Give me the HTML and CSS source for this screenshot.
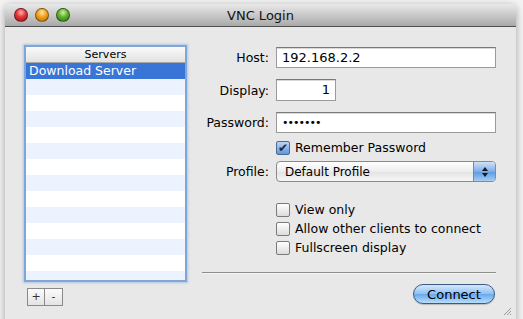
FILE: index.html
```html
<!DOCTYPE html>
<html lang="en">
<head>
  <meta charset="UTF-8">
  <title>VNC Login</title>
  <link rel="stylesheet" href="styles.css">
</head>
<body>
  <div class="window">
    <div class="titlebar">
      <div class="lights">
        <span class="light red"></span>
        <span class="light yellow"></span>
        <span class="light green"></span>
      </div>
      <div class="title">VNC Login</div>
    </div>

    <div class="content">
      <div class="left">
        <div class="list">
          <div class="list-head">Servers</div>
          <div class="row selected">Download Server</div>
          <div class="row alt"></div>
          <div class="row"></div>
          <div class="row alt"></div>
          <div class="row"></div>
          <div class="row alt"></div>
          <div class="row"></div>
          <div class="row alt"></div>
          <div class="row"></div>
          <div class="row alt"></div>
          <div class="row"></div>
          <div class="row alt"></div>
          <div class="row"></div>
          <div class="row alt"></div>
        </div>
        <div class="list-buttons">
          <button class="sq">+</button><button class="sq">-</button>
        </div>
      </div>

      <div class="right">
        <div class="field-row">
          <label>Host:</label>
          <div class="text-field wide">192.168.2.2</div>
        </div>
        <div class="field-row gap11">
          <label>Display:</label>
          <div class="text-field short">1</div>
        </div>
        <div class="field-row gap11">
          <label>Password:</label>
          <div class="text-field wide dots">&#8226;&#8226;&#8226;&#8226;&#8226;&#8226;&#8226;</div>
        </div>
        <div class="field-row check-row first">
          <label></label>
          <div class="check"><span class="box checked">&#10004;</span>Remember Password</div>
        </div>
        <div class="field-row gap5">
          <label>Profile:</label>
          <div class="popup">
            <span class="popup-text">Default Profile</span>
            <span class="popup-arrows">
              <svg width="8" height="12" viewBox="0 0 8 12"><path d="M4 1 L7 5 L1 5 Z M4 11 L7 7 L1 7 Z" fill="#1a1a1a"/></svg>
            </span>
          </div>
        </div>
        <div class="field-row check-row opts">
          <label></label>
          <div class="check"><span class="box"></span>View only</div>
        </div>
        <div class="field-row check-row">
          <label></label>
          <div class="check"><span class="box"></span>Allow other clients to connect</div>
        </div>
        <div class="field-row check-row">
          <label></label>
          <div class="check"><span class="box"></span>Fullscreen display</div>
        </div>
        <div class="separator"></div>
        <div class="actions">
          <button class="connect">Connect</button>
        </div>
      </div>
    </div>
    <div class="grip">
      <svg width="10" height="10" viewBox="0 0 10 10"><path d="M9 2 L2 9 M9 5 L5 9 M9 8 L8 9" stroke="#999" stroke-width="1"/></svg>
    </div>
  </div>
</body>
</html>
```

FILE: styles.css
```css
body {
  margin: 0;
  background: #f4f4f4;
  font-family: "DejaVu Sans", "Liberation Sans", sans-serif;
  font-size: 12.5px;
  color: #000;
  overflow: hidden;
}
.window {
  position: relative;
  margin: 4px 0 0 5px;
  width: 511px;
  height: 330px;
  background: #e8e8e8;
  border-radius: 5px 5px 0 0;
  box-shadow: 0 2px 8px rgba(0,0,0,0.35);
}
.titlebar {
  height: 22px;
  border-radius: 5px 5px 0 0;
  background: linear-gradient(#e9e9e9, #a9a9a9);
  border-bottom: 1px solid #505050;
  display: flex;
  align-items: center;
  position: relative;
}
.lights {
  display: flex;
  gap: 7px;
  padding-left: 9px;
  position: relative;
  z-index: 1;
}
.light {
  width: 14px;
  height: 14px;
  border-radius: 50%;
  box-sizing: border-box;
  border: 1px solid rgba(0,0,0,0.4);
}
.red { background: radial-gradient(circle at 50% 30%, #ffb0b0 0, #e0343a 45%, #a01018 100%); }
.yellow { background: radial-gradient(circle at 50% 30%, #ffe4a0 0, #f0a020 45%, #b06a00 100%); }
.green { background: radial-gradient(circle at 50% 30%, #d0f0a0 0, #60b030 45%, #2c7010 100%); }
.title {
  position: absolute;
  left: 0;
  right: 0;
  text-align: center;
  font-size: 13px;
  color: #111;
}
.content {
  display: flex;
  padding: 20px 0 0 21px;
}
.left {
  width: 159px;
}
.list {
  height: 233px;
  background: #fff;
  box-shadow: 0 0 0 2px #7ea6d8, 0 0 2px 3px rgba(126,166,216,0.5);
  overflow: hidden;
}
.list-head {
  height: 15px;
  line-height: 15px;
  text-align: center;
  font-size: 11px;
  background: linear-gradient(#fafafa, #e2e2e2);
  border-bottom: 1px solid #a8a8a8;
}
.row {
  height: 16px;
  line-height: 16px;
  padding-left: 3px;
}
.row.alt { background: #edf3fe; }
.row.selected {
  background: #3875d7;
  color: #fff;
}
.list-buttons {
  margin: 8px 0 0 1px;
  display: flex;
}
.sq {
  width: 18px;
  height: 18px;
  padding: 0;
  border: 1px solid #8a8a8a;
  background: linear-gradient(#fbfbfb, #e4e4e4);
  font-family: "DejaVu Sans", sans-serif;
  font-size: 11px;
  line-height: 14px;
  color: #333;
}
.sq + .sq { border-left: none; }
.right {
  width: 294px;
  margin-left: 17px;
}
.field-row {
  display: flex;
  align-items: center;
}
.field-row label {
  width: 67px;
  margin-right: 7px;
  text-align: right;
  font-size: 12.5px;
}
.gap11 { margin-top: 11px; }
.gap5 { margin-top: 5px; }
.text-field {
  height: 21px;
  box-sizing: border-box;
  border: 1px solid #9a9a9a;
  border-top-color: #7a7a7a;
  background: #fff;
  box-shadow: inset 0 1px 0 #d8d8d8;
  padding: 0 5px;
  line-height: 19px;
  font-size: 13px;
}
.wide { width: 220px; }
.short {
  width: 60px;
  text-align: right;
  height: 22px;
}
.dots {
  font-size: 11px;
  letter-spacing: -1px;
}
.check-row { height: 19px; }
.check-row.first { margin-top: 6px; height: 17px; }
.check-row.opts { margin-top: 18px; }
.check {
  display: flex;
  align-items: center;
  font-size: 12.5px;
}
.box {
  width: 14px;
  height: 14px;
  box-sizing: border-box;
  border: 1px solid #7a7a7a;
  border-radius: 2px;
  background: linear-gradient(#ffffff, #dcdcdc);
  margin-right: 5px;
  font-size: 12px;
  line-height: 12px;
  text-align: center;
  color: #1a2a40;
}
.box.checked {
  background: linear-gradient(#bcd6f4, #5d95dc);
  border-color: #4a6a94;
  overflow: visible;
}
.popup {
  width: 220px;
  height: 21px;
  box-sizing: border-box;
  border: 1px solid #8a8a8a;
  border-radius: 4px;
  background: linear-gradient(#ffffff, #ededed 50%, #e2e2e2 51%, #f6f6f6);
  display: flex;
  align-items: center;
  justify-content: space-between;
  overflow: hidden;
}
.popup-text {
  padding-left: 8px;
  font-size: 12px;
}
.popup-arrows {
  width: 21px;
  height: 100%;
  display: flex;
  align-items: center;
  justify-content: center;
  border-left: 1px solid #6a8ab8;
  background: linear-gradient(#cfe2f8, #7faee8 50%, #5d97e2 51%, #a6cdf4);
}
.separator {
  margin-top: 15px;
  height: 1px;
  background: #8e8e8e;
  border-bottom: 1px solid #f4f4f4;
}
.actions {
  display: flex;
  justify-content: flex-end;
  margin-top: 10px;
}
.connect {
  width: 82px;
  height: 20px;
  margin-right: 1px;
  border: 1px solid #3b5a8a;
  border-radius: 10px;
  background: linear-gradient(#d6e8fb, #92c1f1 48%, #6aa9ec 52%, #b7ddfb);
  font-family: "DejaVu Sans", sans-serif;
  font-size: 13px;
  color: #000;
  padding: 0;
  box-shadow: 0 1px 1px rgba(0,0,0,0.2);
}
.grip {
  position: absolute;
  right: 4px;
  top: 300px;
}
```
